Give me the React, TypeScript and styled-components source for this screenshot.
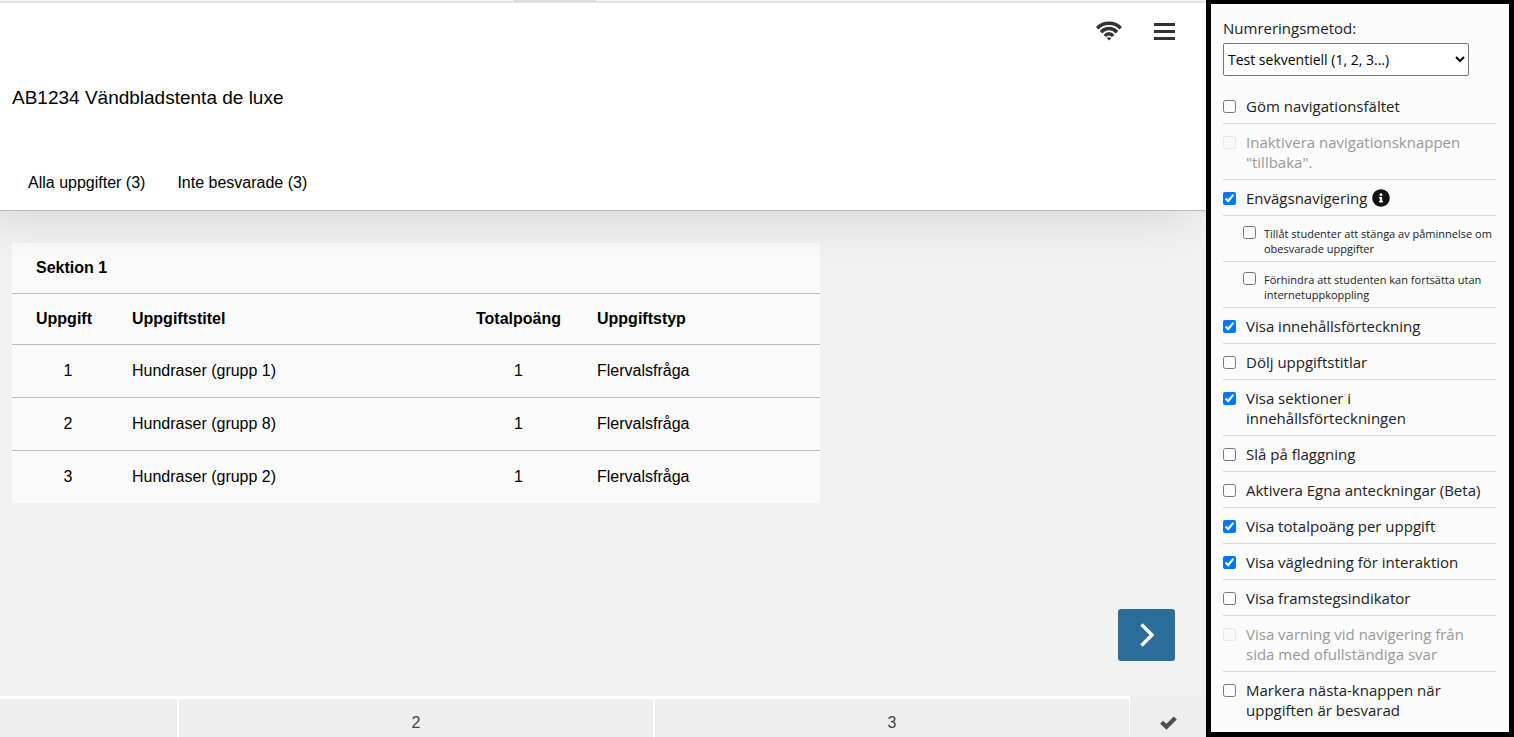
import React from "react";
import styled, { createGlobalStyle } from "styled-components";
import { FaInfoCircle } from "react-icons/fa";

const GlobalStyle = createGlobalStyle`
  *, *::before, *::after { box-sizing: border-box; }
  body {
    margin: 0;
    background: #f1f1f1;
    color: #000;
    font: 16px/20px "Liberation Sans", Arial, sans-serif;
  }
  button { font: inherit; color: inherit; border: 0; padding: 0; background: none; cursor: pointer; }
`;

const Page = styled.div`
  display: flex;
  min-height: 100vh;
`;

const Preview = styled.div`
  flex: 1;
  min-width: 0;
  display: flex;
  flex-direction: column;
  overflow: hidden;
`;

const BrowserEdge = styled.div`
  position: relative;
  z-index: 2;
  height: 3px;
  padding-left: 514px;
  background: #f3f3f3;
  border-bottom: 2px solid #dfe5e9;
`;

const BrowserTab = styled.div`
  width: 82px;
  height: 2px;
  background: #dedede;
  border: solid #d4d4d4;
  border-width: 0 1px;
`;

const Header = styled.header`
  position: relative;
  z-index: 1;
  background: #fff;
  border-bottom: 1px solid #bbb;
  box-shadow: -16px 0 50px rgba(0, 0, 0, 0.14);
`;

const Tools = styled.div`
  display: flex;
  justify-content: flex-end;
  align-items: center;
  gap: 32px;
  height: 56px;
  padding-right: 31px;
`;

const ToolButton = styled.button`
  display: flex;
`;

const Title = styled.h1`
  margin: 0;
  padding: 27px 12px 0;
  font-size: 19px;
  line-height: 24px;
  font-weight: 400;
`;

const Tabs = styled.nav`
  display: flex;
  gap: 32px;
  padding: 63px 28px 17px;
`;

const Tab = styled.button`
  line-height: 20px;
`;

const Content = styled.main`
  flex: 1;
  padding: 32px 12px;
`;

const TaskTable = styled.table`
  width: 100%;
  max-width: 808px;
  table-layout: fixed;
  border-spacing: 0;
  background: #fafafa;
`;

const Row = styled.tr<{ $height: number }>`
  height: ${(p) => p.$height}px;
  & > * { border-bottom: 1px solid #bbb; }
  tbody &:last-child > * { border-bottom: 0; }
`;

const HeadCell = styled.th<{ $inset?: number; $center?: boolean }>`
  padding: 0 0 0 ${(p) => p.$inset ?? 8}px;
  text-align: ${(p) => (p.$center ? "center" : "left")};
`;

const Cell = styled.td<{ $center?: boolean }>`
  padding: 0 0 0 ${(p) => (p.$center ? 0 : 8)}px;
  text-align: ${(p) => (p.$center ? "center" : "left")};
`;

const NextArea = styled.div`
  display: flex;
  justify-content: flex-end;
  padding: 0 31px 35px;
`;

const NextButton = styled.button`
  display: flex;
  align-items: center;
  justify-content: center;
  width: 57px;
  height: 52px;
  border-radius: 3px;
  background: #2a6d98;
`;

const Footer = styled.footer`
  display: flex;
  height: 41px;
  background: #eee;
  color: #444;
`;

const Steps = styled.div`
  flex: 1;
  display: grid;
  grid-template-columns: 177px 1fr 1fr;
  gap: 2px;
  padding: 3px 1px 0 0;
  background: #fff;
`;

const Step = styled.button`
  padding-top: 10px;
  background: #eee;
`;

const DoneButton = styled.button`
  display: flex;
  align-items: center;
  justify-content: center;
  width: 76px;
  padding-top: 12px;
`;

const Settings = styled.aside`
  flex: none;
  width: 308px;
  padding: 14px 13px 5px 12px;
  border: 5px solid #000;
  border-top-width: 4px;
  background: #fbfbfb;
  color: #222;
  font: 15px/20px "Open Sans", sans-serif;
`;

const FieldLabel = styled.label`
  display: block;
  padding-bottom: 5px;
`;

const Select = styled.select`
  display: block;
  width: 246px;
  height: 33px;
  margin-bottom: 12px;
  border: 1px solid #767676;
  border-radius: 2px;
  background: #fff;
  color: #000;
  font: 14px/20px "Open Sans", sans-serif;
`;

const Option = styled.label<{ $nested?: boolean; $disabled?: boolean }>`
  display: flex;
  align-items: flex-start;
  gap: ${(p) => (p.$nested ? 8 : 10)}px;
  padding: ${(p) => (p.$nested ? "10px 0 5px 20px" : "8px 0 7px")};
  border-bottom: 1px solid #d9d9d9;
  color: ${(p) => (p.$disabled ? "#999" : "inherit")};
  font-size: ${(p) => (p.$nested ? 11 : 15)}px;
  line-height: ${(p) => (p.$nested ? 15 : 20)}px;
  &:last-child { border-bottom: 0; }
`;

const Checkbox = styled.input<{ $nested?: boolean }>`
  flex: none;
  width: 13px;
  height: 13px;
  margin: ${(p) => (p.$nested ? 0 : 4)}px 0 0;
  &:disabled { opacity: 0.45; }
`;

const OptionText = styled.span`
  display: flex;
  align-items: center;
  gap: 5px;
`;

type Setting = { text: string; checked?: boolean; disabled?: boolean; nested?: boolean; info?: boolean };

const settings: Setting[] = [
  { text: "Göm navigationsfältet" },
  { text: 'Inaktivera navigationsknappen "tillbaka".', disabled: true },
  { text: "Envägsnavigering", checked: true, info: true },
  { text: "Tillåt studenter att stänga av påminnelse om obesvarade uppgifter", nested: true },
  { text: "Förhindra att studenten kan fortsätta utan internetuppkoppling", nested: true },
  { text: "Visa innehållsförteckning", checked: true },
  { text: "Dölj uppgiftstitlar" },
  { text: "Visa sektioner i innehållsförteckningen", checked: true },
  { text: "Slå på flaggning" },
  { text: "Aktivera Egna anteckningar (Beta)" },
  { text: "Visa totalpoäng per uppgift", checked: true },
  { text: "Visa vägledning för interaktion", checked: true },
  { text: "Visa framstegsindikator" },
  { text: "Visa varning vid navigering från sida med ofullständiga svar", disabled: true },
  { text: "Markera nästa-knappen när uppgiften är besvarad" },
];

const tasks = [
  { no: 1, title: "Hundraser (grupp 1)", height: 53 },
  { no: 2, title: "Hundraser (grupp 8)", height: 53 },
  { no: 3, title: "Hundraser (grupp 2)", height: 52 },
];

const WifiIcon = () => (
  <svg width="26" height="20" viewBox="0 0 26 20" fill="none" stroke="#333" strokeWidth="3.5">
    <path d="M1.2 7.2Q6 2.2 13 2.2T24.8 7.2" />
    <path d="M5 11.2Q8.4 7.6 13 7.6T21 11.2" />
    <path d="M8.8 15Q10.6 12.8 13 12.8T17.2 15" />
    <path d="M10.6 17Q13 15.4 15.4 17L13 19.6Z" fill="#333" stroke="none" />
  </svg>
);

const MenuIcon = () => (
  <svg width="21" height="17" viewBox="0 0 21 17" fill="#333">
    <path d="M0 0h21v3H0zM0 7h21v3H0zM0 14h21v3H0z" />
  </svg>
);

const ChevronIcon = () => (
  <svg width="16" height="24" viewBox="0 0 16 24" fill="none" stroke="#fff" strokeWidth="3.4">
    <path d="M2.5 1.5L13 12L2.5 22.5" />
  </svg>
);

const CheckIcon = () => (
  <svg width="17" height="14" viewBox="0 0 17 14" fill="none" stroke="#4d4d4d" strokeWidth="4.2">
    <path d="M1.6 6.2L6.4 10.8L15.3 2" />
  </svg>
);

export default function App() {
  return (
    <Page>
      <GlobalStyle />
      <Preview>
        <BrowserEdge>
          <BrowserTab />
        </BrowserEdge>
        <Header>
          <Tools>
            <ToolButton aria-label="Nätverk"><WifiIcon /></ToolButton>
            <ToolButton aria-label="Meny"><MenuIcon /></ToolButton>
          </Tools>
          <Title>AB1234 Vändbladstenta de luxe</Title>
          <Tabs>
            <Tab>Alla uppgifter (3)</Tab>
            <Tab>Inte besvarade (3)</Tab>
          </Tabs>
        </Header>
        <Content>
          <TaskTable>
            <colgroup>
              <col width="112" />
              <col width="324" />
              <col width="141" />
              <col />
            </colgroup>
            <thead>
              <Row $height={51}>
                <HeadCell colSpan={4} $inset={24}>Sektion 1</HeadCell>
              </Row>
              <Row $height={51}>
                <HeadCell $inset={24}>Uppgift</HeadCell>
                <HeadCell>Uppgiftstitel</HeadCell>
                <HeadCell $inset={0} $center>Totalpoäng</HeadCell>
                <HeadCell>Uppgiftstyp</HeadCell>
              </Row>
            </thead>
            <tbody>
              {tasks.map((t) => (
                <Row key={t.no} $height={t.height}>
                  <Cell $center>{t.no}</Cell>
                  <Cell>{t.title}</Cell>
                  <Cell $center>1</Cell>
                  <Cell>Flervalsfråga</Cell>
                </Row>
              ))}
            </tbody>
          </TaskTable>
        </Content>
        <NextArea>
          <NextButton aria-label="Nästa"><ChevronIcon /></NextButton>
        </NextArea>
        <Footer>
          <Steps>
            <Step aria-label="Föregående" />
            <Step>2</Step>
            <Step>3</Step>
          </Steps>
          <DoneButton aria-label="Klar"><CheckIcon /></DoneButton>
        </Footer>
      </Preview>
      <Settings>
        <FieldLabel htmlFor="numbering">Numreringsmetod:</FieldLabel>
        <Select id="numbering">
          <option>Test sekventiell (1, 2, 3...)</option>
        </Select>
        <div>
          {settings.map((s) => (
            <Option key={s.text} $nested={s.nested} $disabled={s.disabled}>
              <Checkbox type="checkbox" $nested={s.nested} defaultChecked={s.checked} disabled={s.disabled} />
              <OptionText>
                {s.text}
                {s.info && <FaInfoCircle size={18} color="#111" />}
              </OptionText>
            </Option>
          ))}
        </div>
      </Settings>
    </Page>
  );
}
